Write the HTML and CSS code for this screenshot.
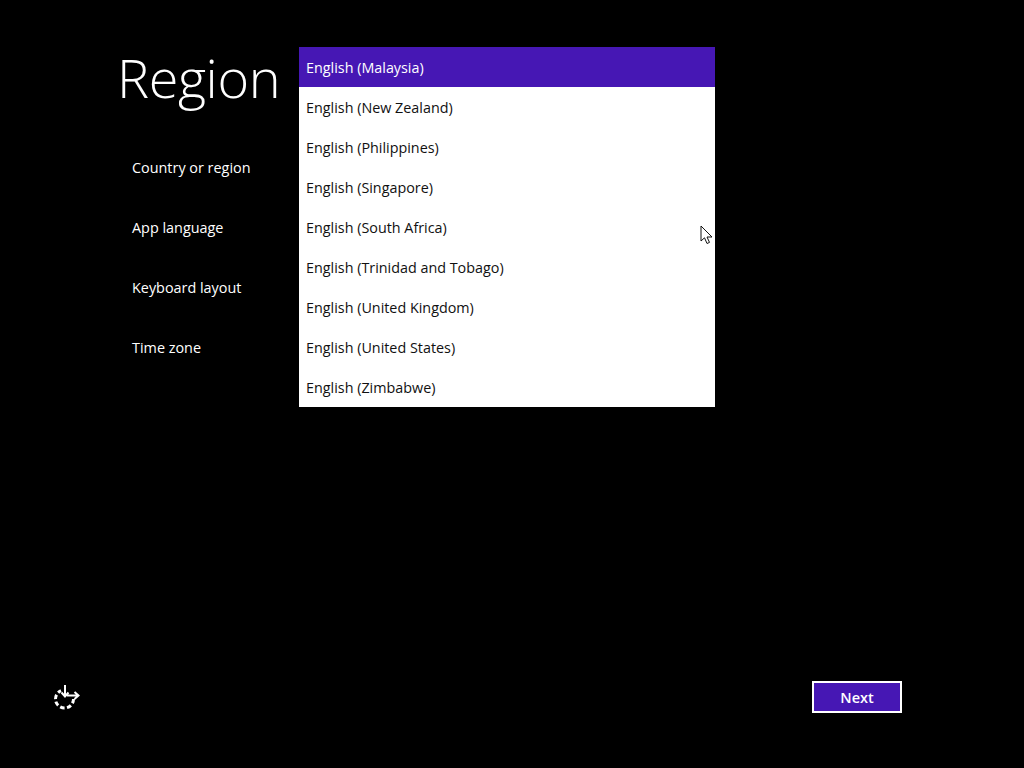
FILE: index.html
```html
<!DOCTYPE html>
<html lang="en">
<head>
<meta charset="utf-8">
<title>Region</title>
<link rel="stylesheet" href="styles.css">
</head>
<body>
<div class="screen">
  <main class="content">
    <section class="side">
      <h1 class="title">Region</h1>
      <ul class="labels">
        <li>Country or region</li>
        <li>App language</li>
        <li>Keyboard layout</li>
        <li>Time zone</li>
      </ul>
    </section>
    <ul class="list">
      <li class="selected">English (Malaysia)</li>
      <li>English (New Zealand)</li>
      <li>English (Philippines)</li>
      <li>English (Singapore)</li>
      <li>English (South Africa)</li>
      <li>English (Trinidad and Tobago)</li>
      <li>English (United Kingdom)</li>
      <li>English (United States)</li>
      <li>English (Zimbabwe)</li>
    </ul>
  </main>
  <footer class="footer">
    <svg class="ease" width="28" height="28" viewBox="0 0 28 28" aria-hidden="true">
      <path class="ease-ring" d="M21.500 16A9 9 0 1 1 9 7.700"/>
      <path class="ease-line" d="M13 2V13M9.500 9.500L13 13.500L16.500 9.500M15 12.500H26M22.500 9L26.500 12.500L22.500 16"/>
    </svg>
    <button class="next" type="button">Next</button>
  </footer>
  <svg class="cursor" width="14" height="21" viewBox="0 0 14 21" aria-hidden="true">
    <path d="M1 1V16L4.500 12.800L7 18.500L9.500 17.400L7 12H12Z"/>
  </svg>
</div>
</body>
</html>
```

FILE: styles.css
```css
* { box-sizing: border-box; }
html, body { margin: 0; padding: 0; background: #000; }
body { font-family: "Open Sans", "Noto Sans", sans-serif; color: #fff; }
.screen { position: relative; width: 1024px; height: 768px; display: flex; flex-direction: column; overflow: hidden; }
.content { display: flex; align-items: flex-start; padding-top: 47px; flex: 1; }
.side { width: 299px; flex: none; }
.title { margin: 0; padding-left: 117px; height: 60px; font-size: 54px; line-height: 60px; font-weight: 300; letter-spacing: -0.4px; }
.labels { list-style: none; margin: 30px 0 0; padding: 0 0 0 132px; }
.labels li { height: 60px; font-size: 14.400px; line-height: 62px; }
.list { list-style: none; margin: 0; padding: 0; width: 416px; background: #fff; color: #111; }
.list li { height: 40px; line-height: 42px; padding-left: 7px; font-size: 14.350px; }
.list .selected { background: #4617b4; color: #fff; }
.footer { display: flex; align-items: center; justify-content: space-between; padding: 0 122px 55px 52px; }
.ease { display: block; }
.ease-ring { fill: none; stroke: #fff; stroke-width: 3; stroke-dasharray: 4.500 2.500; }
.ease-line { fill: none; stroke: #fff; stroke-width: 2; }
.next { width: 90px; height: 32px; background: #4617b4; border: 2px solid #fff; color: #fff; font-family: inherit; font-size: 14.500px; font-weight: 600; padding: 0; }
.cursor { position: absolute; left: 700px; top: 225px; }
.cursor path { fill: #fff; stroke: #111; stroke-width: 1; }
```
